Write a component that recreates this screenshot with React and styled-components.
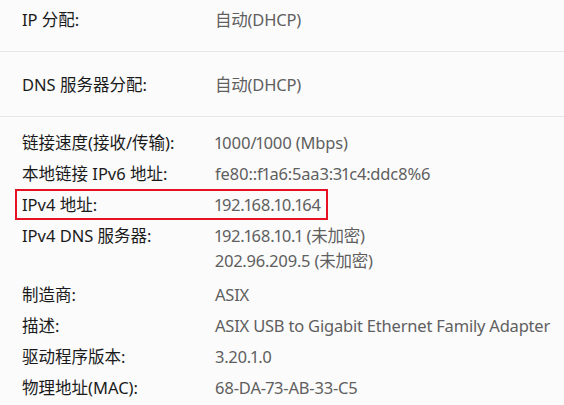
import React from 'react';
import styled, { createGlobalStyle } from 'styled-components';

const GlobalStyle = createGlobalStyle`
  html, body {
    margin: 0;
    padding: 0;
    background: #fbfbfb;
    overflow: hidden;
  }
  body {
    font-family: "Noto Sans", "Noto Sans CJK SC", sans-serif;
  }
`;

const Page = styled.div`
  width: 564px;
  height: 405px;
  overflow: hidden;
  background: #fbfbfb;
`;

const Scroller = styled.div`
  margin-top: -13px;
`;

const Section = styled.div`
  display: grid;
  grid-template-columns: 193px 1fr;
  align-items: center;
  height: 64px;
  padding-left: 22px;
  border-bottom: 1px solid #e6e6e6;
`;

const List = styled.div`
  display: flex;
  flex-direction: column;
  padding: 10px 0 0 15px;
`;

const Row = styled.div`
  display: grid;
  grid-template-columns: 193px 1fr;
  align-items: start;
  width: ${p => (p.$highlight ? '304px' : 'auto')};
  padding: 1px 0 ${p => (p.$multi ? '4px' : '1px')} 5px;
  border: 2px solid ${p => (p.$highlight ? '#e81123' : 'transparent')};
`;

const Label = styled.div`
  font-size: 16.5px;
  line-height: 25px;
  color: #1a1a1a;
  white-space: nowrap;
`;

const Value = styled.div`
  font-size: 16.5px;
  line-height: 25px;
  color: #5f5f5f;
  white-space: nowrap;
  font-variant-numeric: proportional-nums;
  letter-spacing: -0.2px;
`;

const rows = [
  { label: '链接速度(接收/传输):', value: ['1000/1000 (Mbps)'] },
  { label: '本地链接 IPv6 地址:', value: ['fe80::f1a6:5aa3:31c4:ddc8%6'] },
  { label: 'IPv4 地址:', value: ['192.168.10.164'], highlight: true },
  { label: 'IPv4 DNS 服务器:', value: ['192.168.10.1 (未加密)', '202.96.209.5 (未加密)'] },
  { label: '制造商:', value: ['ASIX'] },
  { label: '描述:', value: ['ASIX USB to Gigabit Ethernet Family Adapter'] },
  { label: '驱动程序版本:', value: ['3.20.1.0'] },
  { label: '物理地址(MAC):', value: ['68-DA-73-AB-33-C5'] },
];

export default function App() {
  return (
    <Page>
      <GlobalStyle />
      <Scroller>
        <Section>
          <Label>IP 分配:</Label>
          <Value>自动(DHCP)</Value>
        </Section>
        <Section>
          <Label>DNS 服务器分配:</Label>
          <Value>自动(DHCP)</Value>
        </Section>
        <List>
          {rows.map(r => (
            <Row key={r.label} $highlight={r.highlight} $multi={r.value.length > 1}>
              <Label>{r.label}</Label>
              <div>
                {r.value.map(v => (
                  <Value key={v}>{v}</Value>
                ))}
              </div>
            </Row>
          ))}
        </List>
      </Scroller>
    </Page>
  );
}
